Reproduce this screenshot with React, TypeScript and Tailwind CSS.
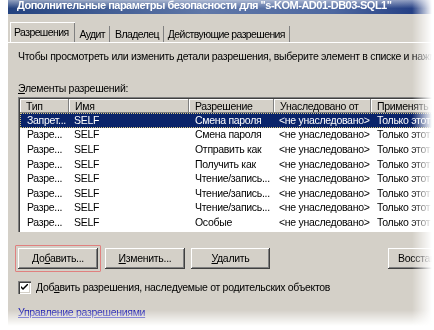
const rows = [
  { type: "Запрет...", name: "SELF", perm: "Смена пароля", selected: true },
  { type: "Разре...", name: "SELF", perm: "Смена пароля" },
  { type: "Разре...", name: "SELF", perm: "Отправить как" },
  { type: "Разре...", name: "SELF", perm: "Получить как" },
  { type: "Разре...", name: "SELF", perm: "Чтение/запись..." },
  { type: "Разре...", name: "SELF", perm: "Чтение/запись..." },
  { type: "Разре...", name: "SELF", perm: "Чтение/запись..." },
  { type: "Разре...", name: "SELF", perm: "Особые" },
];

const raised =
  "shadow-[inset_-1px_-1px_#404040,inset_1px_1px_#ffffff,inset_-2px_-2px_#808080,inset_2px_2px_#d4d0c8]";

function Button({ children, className = "" }: { children: React.ReactNode; className?: string }) {
  return (
    <div
      className={`h-[21px] shrink-0 bg-[#d4d0c8] flex items-center text-black whitespace-nowrap ${raised} ${className}`}
    >
      {children}
    </div>
  );
}

export default function App() {
  return (
    <div className="w-[434px] h-[330px] bg-white overflow-hidden font-['Liberation_Sans',Arial,sans-serif] text-[10.5px] tracking-[-0.3px] leading-[13px] text-black">
      <div className="ml-[8px] w-[434px] h-[330px] [mask-image:linear-gradient(to_right,black_0,black_404px,transparent_424px)]">
        <div className="w-full h-full [mask-image:linear-gradient(to_bottom,black_0,black_310px,transparent_326px)] flex flex-col">
          {/* title bar */}
          <div className="h-[14px] shrink-0 bg-[linear-gradient(to_bottom,rgba(255,255,255,0.5),rgba(255,255,255,0)_60%),linear-gradient(to_right,#23427f,#5f77a8_45%,#4d67a0_75%,#16317a)] overflow-hidden">
            <div className="pl-[9px] text-white font-bold text-[11px] tracking-[-0.5px] leading-[12px] -mt-[1px] whitespace-nowrap">
              Дополнительные параметры безопасности для "s-KOM-AD01-DB03-SQL1"
            </div>
          </div>

          <div className="flex-1 bg-[#d4d0c8] pt-[8px]">
            {/* tabs */}
            <div className="flex items-end pl-[2px] h-[20px] whitespace-nowrap tracking-[-0.6px]">
              <div className="h-[20px] pl-[3px] pr-[7px] pt-[3px] border-t border-l border-white shadow-[inset_-1px_0_#808080] bg-[#d4d0c8] relative z-10">
                Разрешения
              </div>
              <div className="h-[16px] px-[4px] border-r border-[#808080] flex items-center">Аудит</div>
              <div className="h-[16px] pl-[5px] pr-[4px] border-r border-[#808080] flex items-center">Владелец</div>
              <div className="h-[16px] pl-[4px] pr-[4px] border-r border-[#808080] flex items-center">
                Действующие разрешения
              </div>
            </div>

            <div className="border-t border-white pl-[10px]">
              <div className="mt-[7px] whitespace-nowrap">
                Чтобы просмотреть или изменить детали разрешения, выберите элемент в списке и нажмите
              </div>

              <div className="mt-[19px]">
                <span className="underline">Э</span>лементы разрешений:
              </div>

              {/* list */}
              <div className="mt-[2px] w-[420px] bg-white border-t border-l border-[#808080] shadow-[inset_1px_1px_#404040]">
                <div className="flex h-[14px] leading-[14px] ml-[1px] mt-[1px]">
                  {[
                    ["Тип", "w-[49px]"],
                    ["Имя", "w-[120px]"],
                    ["Разрешение", "w-[85px]"],
                    ["Унаследовано от", "w-[97px]"],
                    ["Применять к", "w-[90px]"],
                  ].map(([label, w]) => (
                    <div
                      key={label}
                      className={`${w} shrink-0 pl-[6px] bg-[#d4d0c8] shadow-[inset_-1px_-1px_#808080,inset_1px_1px_#ffffff] whitespace-nowrap overflow-hidden`}
                    >
                      {label}
                    </div>
                  ))}
                </div>
                <div className="pb-[2px]">
                  {rows.map((r, i) => (
                    <div
                      key={i}
                      className={`flex h-[14.6px] items-center ml-[1px] whitespace-nowrap ${
                        r.selected
                          ? "bg-[#0a246a] text-white outline outline-1 outline-dotted outline-[#d8c880] -outline-offset-1"
                          : ""
                      }`}
                    >
                      <div className="w-[49px] shrink-0 pl-[7px]">{r.type}</div>
                      <div className="w-[120px] shrink-0 pl-[5px]">{r.name}</div>
                      <div className="w-[85px] shrink-0 pl-[6px]">{r.perm}</div>
                      <div className="w-[97px] shrink-0 pl-[5px]">&lt;не унаследовано&gt;</div>
                      <div className="w-[70px] shrink-0 pl-[6px]">Только этот объект</div>
                    </div>
                  ))}
                </div>
              </div>

              {/* buttons */}
              <div className="flex mt-[13px] items-center">
                <div className="-ml-[3px] shrink-0 p-[2px] border border-[#e0807f] rounded-[1px]">
                  <Button className="w-[80px] justify-center">
                    <span>
                      До<span className="underline">б</span>авить...
                    </span>
                  </Button>
                </div>
                <Button className="w-[80px] ml-[4px] justify-center">
                  <span>
                    <span className="underline">И</span>зменить...
                  </span>
                </Button>
                <Button className="w-[79px] ml-[6px] justify-center">
                  <span>
                    <span className="underline">У</span>далить
                  </span>
                </Button>
                <Button className="w-[150px] ml-[118px] pl-[10px]">
                  <span>Восстановить по умолчанию</span>
                </Button>
              </div>

              {/* checkbox */}
              <div className="flex items-center mt-[9px]">
                <div className="w-[13px] h-[13px] shrink-0 bg-white shadow-[inset_1px_1px_#808080,inset_2px_2px_#404040,inset_-1px_-1px_#ffffff,inset_-2px_-2px_#d4d0c8] flex items-center justify-center">
                  <svg width="7" height="7" viewBox="0 0 7 7">
                    <path d="M0 2 L0 4 L2 6 L7 1 L7 -1 L2 4 Z" fill="#000" />
                  </svg>
                </div>
                <span className="ml-[5px] whitespace-nowrap">
                  Доб<span className="underline">а</span>вить разрешения, наследуемые от родительских объектов
                </span>
              </div>

              <div className="mt-[12px] text-[#1a1ab0] underline">Управление разрешениями</div>
            </div>
          </div>
        </div>
      </div>
    </div>
  );
}
